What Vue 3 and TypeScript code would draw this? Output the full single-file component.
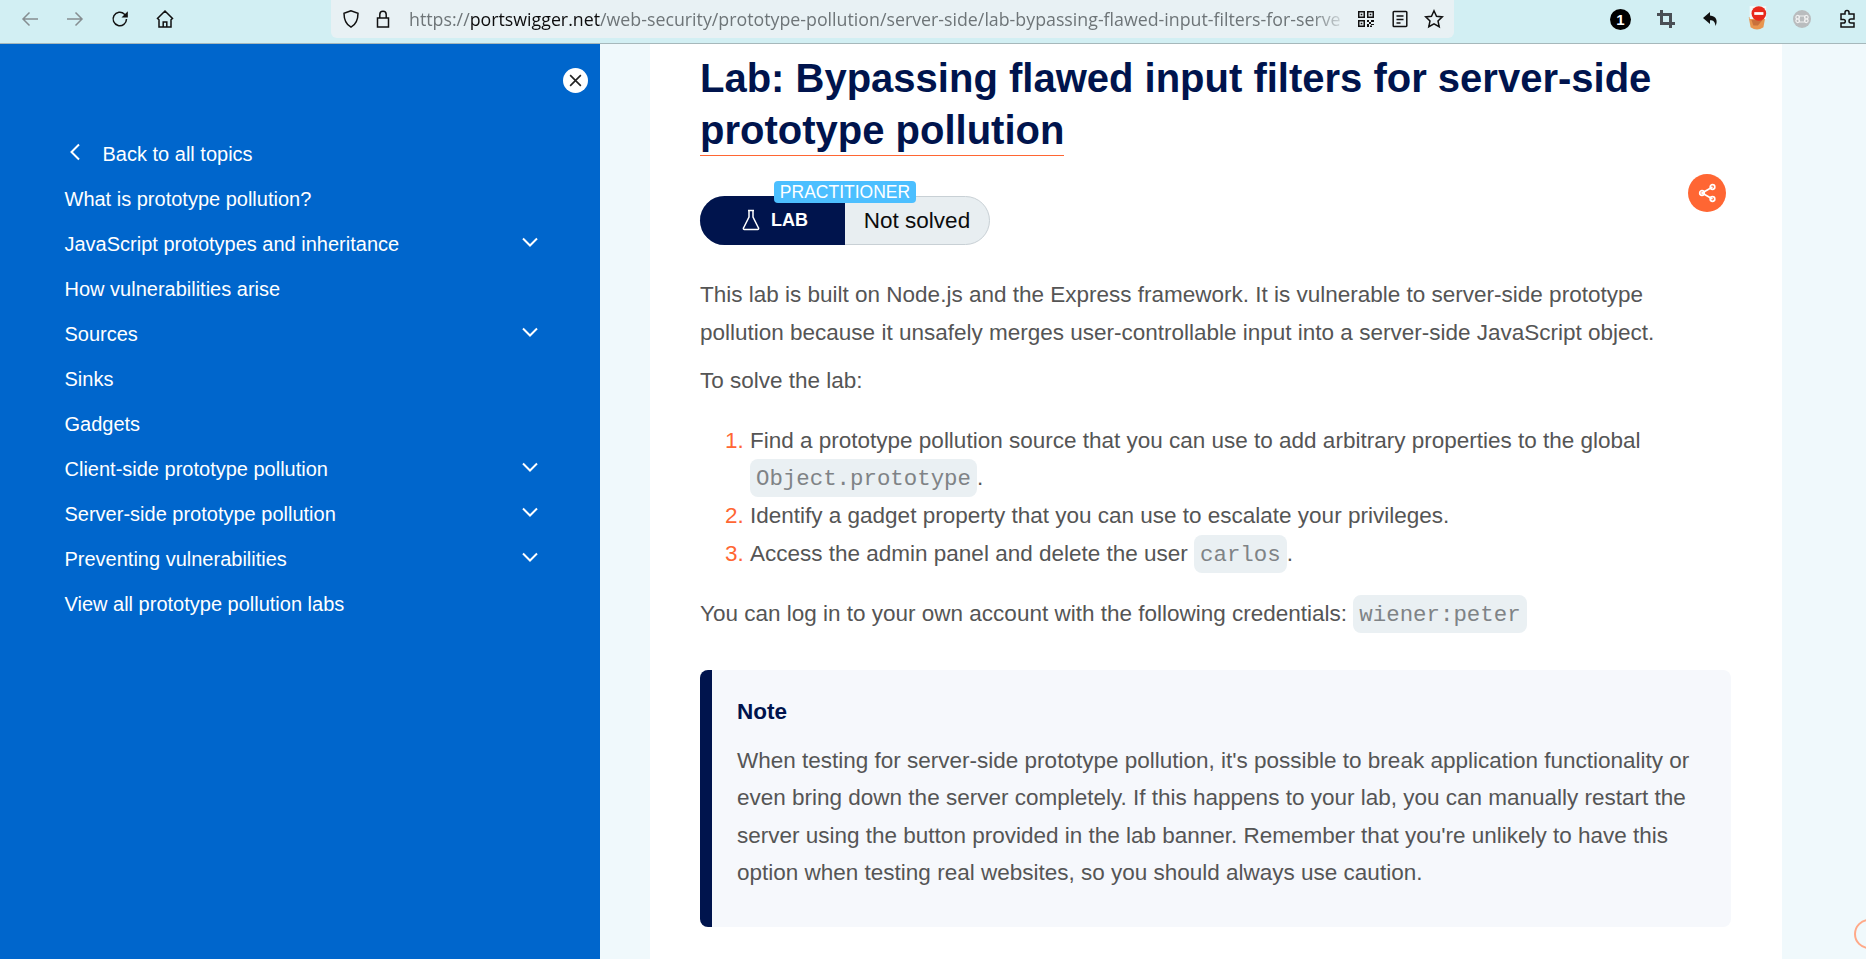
<template>
  <div class="page">
    <!-- Browser toolbar -->
    <header class="toolbar">
      <div class="nav-icons">
        <svg class="ico dim" viewBox="0 0 20 20"><path d="M18 10H3M9.500 3.500 3 10l6.500 6.500" /></svg>
        <svg class="ico dim" viewBox="0 0 20 20"><path d="M2 10h15M10.500 3.500 17 10l-6.500 6.500" /></svg>
        <svg class="ico" viewBox="0 0 20 20"><path d="M16.500 10a6.700 6.700 0 1 1-2-4.800L17 7.500" /><path class="fill" d="M17.800 2.200v6.300h-6.300z" /></svg>
        <svg class="ico" viewBox="0 0 20 20"><path d="M10 2 2.500 9.500l1.500 1.300V18h12v-7.200l1.500-1.300zM8.200 18v-5h3.600v5" /></svg>
      </div>
      <div class="urlbar">
        <svg class="ico" viewBox="0 0 20 20"><path d="M10 1.800 3 4.200c0 6.500 1.500 11 7 14 5.500-3 7-7.500 7-14z" /></svg>
        <svg class="ico lock" viewBox="0 0 20 20"><path d="M4.500 9h11v9h-11zM6.800 9V5.500a3.200 3.200 0 0 1 6.400 0V9" /></svg>
        <div class="url">
          <span>https://</span><b>portswigger.net</b><span>/web-security/prototype-pollution/server-side/lab-bypassing-flawed-input-filters-for-serve</span>
        </div>
        <svg class="ico qr" viewBox="0 0 20 20">
          <path class="fill" d="M2 2h7v7H2zM3.500 3.500v4h4v-4zM11 2h7v7h-7zM12.500 3.500v4h4v-4zM2 11h7v7H2zM3.500 12.500v4h4v-4z" />
          <path class="fill" d="M4.700 4.700h1.600v1.600H4.700zM13.700 4.700h1.600v1.600h-1.600zM4.700 13.700h1.600v1.600H4.700zM11 11h2v2h-2zM15 11h3v2h-3zM13 13h2v2h-2zM11 15h2v3h-2zM15 15h3v1h-3zM14 16.500h2V18h-2z" />
        </svg>
        <svg class="ico" viewBox="0 0 20 20"><path d="M4 2.500h12a.8.800 0 0 1 .8.800v13.400a.8.800 0 0 1-.8.800H4a.8.800 0 0 1-.8-.8V3.300a.8.800 0 0 1 .8-.8zM6.500 7h7M6.500 10.500h7M6.500 14h4" /></svg>
        <svg class="ico" viewBox="0 0 20 20"><path d="m10 1.800 2.500 5.400 5.800.7-4.300 4 1.200 5.800-5.200-2.900-5.200 2.900L6 11.900l-4.300-4 5.800-.7z" /></svg>
      </div>
      <div class="ext-icons">
        <span class="one">1</span>
        <svg class="ico crop" viewBox="0 0 20 20"><path d="M5.500 1v13.500H19M1 5.500h13.500V19" /></svg>
        <svg class="ico" viewBox="0 0 20 20"><path class="fill" d="M9 3 2 9l7 6v-3.700c3.300 0 5 1.200 5.500 5.700 2.500-4.800 1.200-10-5.500-10.500z" /></svg>
        <div class="blocker">
          <svg viewBox="0 0 24 28">
            <path d="M3 12h18l-2 11q-7 5-14 0z" fill="#e8954f" />
            <path d="M6 15h12l-5 6H8z" fill="#c9703c" />
            <rect x="4" y="0" width="18" height="14" fill="#f4f9fa" />
            <circle cx="14" cy="8" r="8" fill="#e8291c" />
            <rect x="9" y="6.500" width="10" height="3" fill="#fff" />
          </svg>
        </div>
        <svg class="grey-ext" viewBox="0 0 20 20">
          <circle cx="10" cy="10" r="9" fill="#b9bcbe" />
          <path d="M7 7h6v6H7zM7 7a1.800 1.800 0 1 1-.1-.1M13 7a1.800 1.800 0 1 0 .1-.1M7 13a1.800 1.800 0 1 0-.1.100M13 13a1.800 1.800 0 1 1 .1.100" fill="none" stroke="#f0f0f0" stroke-width="1.200" />
        </svg>
        <svg class="ico" viewBox="0 0 20 20"><path d="M8 5V3.500a2 2 0 0 1 4 0V5h5v5h-3a2 2 0 0 0 0 4h3v4H4v-4h2.500a1.800 1.800 0 0 0 0-3.600H4V5z" /></svg>
      </div>
    </header>

    <div class="body">
      <!-- Sidebar -->
      <aside class="sidebar">
        <div class="close-row">
          <button class="close" type="button">
            <svg viewBox="0 0 14 14"><path d="m2 2 10 10M12 2 2 12" /></svg>
          </button>
        </div>
        <a class="back">
          <svg viewBox="0 0 12 18"><path d="M10 1.500 2.500 9l7.500 7.500" /></svg>
          <span>Back to all topics</span>
        </a>
        <ul class="topics">
          <li v-for="t in topics" :key="t.label">
            <span>{{ t.label }}</span>
            <svg v-if="t.sub" viewBox="0 0 18 10"><path d="m2 1.500 7 7 7-7" /></svg>
          </li>
        </ul>
      </aside>

      <!-- Article -->
      <main class="gutter">
        <article class="content">
          <h1>Lab: Bypassing flawed input filters for server-side <span class="line">prototype pollution</span></h1>

          <div class="status-row">
            <div class="pill">
              <span class="tag">PRACTITIONER</span>
              <div class="pill-lab">
                <svg viewBox="0 0 20 22"><path d="M7 1.500h6M8 1.500v6.500L2.500 19a1 1 0 0 0 1 1.500h13a1 1 0 0 0 1-1.500L12 8V1.500" /></svg>
                <b>LAB</b>
              </div>
              <div class="pill-state">Not solved</div>
            </div>
            <button class="share" type="button">
              <svg viewBox="0 0 22 22">
                <path d="M16.500 5 6 11l10.500 6" />
                <circle cx="16.500" cy="5" r="2.300" /><circle cx="6" cy="11" r="2.300" /><circle cx="16.500" cy="17" r="2.300" />
              </svg>
            </button>
          </div>

          <p>This lab is built on Node.js and the Express framework. It is vulnerable to server-side prototype pollution because it unsafely merges user-controllable input into a server-side JavaScript object.</p>
          <p>To solve the lab:</p>
          <ol>
            <li>Find a prototype pollution source that you can use to add arbitrary properties to the global <code>Object.prototype</code>.</li>
            <li>Identify a gadget property that you can use to escalate your privileges.</li>
            <li>Access the admin panel and delete the user <code>carlos</code>.</li>
          </ol>
          <p>You can log in to your own account with the following credentials: <code>wiener:peter</code></p>

          <section class="note">
            <h4>Note</h4>
            <p>When testing for server-side prototype pollution, it's possible to break application functionality or even bring down the server completely. If this happens to your lab, you can manually restart the server using the button provided in the lab banner. Remember that you're unlikely to have this option when testing real websites, so you should always use caution.</p>
          </section>
        </article>
      </main>
      <span class="corner"></span>
    </div>
  </div>
</template>

<script setup lang="ts">
interface Topic {
  label: string
  sub?: boolean
}

const topics: Topic[] = [
  { label: 'What is prototype pollution?' },
  { label: 'JavaScript prototypes and inheritance', sub: true },
  { label: 'How vulnerabilities arise' },
  { label: 'Sources', sub: true },
  { label: 'Sinks' },
  { label: 'Gadgets' },
  { label: 'Client-side prototype pollution', sub: true },
  { label: 'Server-side prototype pollution', sub: true },
  { label: 'Preventing vulnerabilities', sub: true },
  { label: 'View all prototype pollution labs' },
]
</script>

<style>
html,
body {
  margin: 0;
  height: 100%;
  overflow: hidden;
}
</style>

<style scoped>
.page {
  width: 1866px;
  height: 959px;
  display: flex;
  flex-direction: column;
  overflow: hidden;
  font-family: "Liberation Sans", Arial, sans-serif;
}

/* toolbar */
.toolbar {
  height: 44px;
  box-sizing: border-box;
  flex: none;
  display: flex;
  align-items: flex-start;
  background: #d2eff3;
  border-bottom: 1px solid #a6b8bb;
}
.ico {
  width: 20px;
  height: 20px;
  flex: none;
  fill: none;
  stroke: #111;
  stroke-width: 1.500;
}
.ico .fill,
.ico.qr path {
  fill: #111;
  stroke: none;
}
.ico.dim {
  stroke: #868e91;
}
.nav-icons {
  width: 331px;
  height: 38px;
  flex: none;
  display: flex;
  align-items: center;
  gap: 25px;
  padding-left: 20px;
  box-sizing: border-box;
}
.urlbar {
  width: 1123px;
  height: 38px;
  flex: none;
  display: flex;
  align-items: center;
  padding: 0 10px;
  box-sizing: border-box;
  background: #e8f1f4;
  border-radius: 0 0 6px 6px;
}
.url {
  flex: 1;
  margin: 0 7px 0 16px;
  min-width: 0;
  white-space: nowrap;
  overflow: hidden;
  font-family: "Open Sans", sans-serif;
  font-size: 17.800px;
  color: #6e7578;
  -webkit-mask-image: linear-gradient(to right, #000 96%, transparent);
  mask-image: linear-gradient(to right, #000 96%, transparent);
}
.url b {
  font-weight: 400;
  color: #0c0c0d;
}
.urlbar .ico + .ico {
  margin-left: 14px;
}
.urlbar .ico.lock {
  margin-left: 12px;
}
.ext-icons {
  flex: 1;
  height: 38px;
  display: flex;
  align-items: center;
  gap: 25px;
  padding-left: 156px;
}
.one {
  width: 21px;
  height: 21px;
  flex: none;
  border-radius: 50%;
  background: #000;
  color: #fff;
  font-size: 15px;
  font-weight: 700;
  line-height: 21px;
  text-align: center;
}
.ico.crop {
  stroke: #4a4f55;
  stroke-width: 3;
}
.blocker {
  width: 22px;
  height: 30px;
  flex: none;
}
.blocker svg {
  width: 100%;
  height: 100%;
  display: block;
}
.grey-ext {
  width: 20px;
  height: 20px;
  flex: none;
  margin-left: -1px;
}

/* layout under the toolbar */
.body {
  flex: 1;
  min-height: 0;
  position: relative;
  display: flex;
  overflow: hidden;
  background: #f0f9fc;
}

/* sidebar */
.sidebar {
  width: 600px;
  flex: none;
  box-sizing: border-box;
  padding: 0 54px 0 64.500px;
  background: #0066cc;
  color: #fff;
  font-size: 20px;
}
.close-row {
  height: 50px;
  margin-right: -42px;
  padding-top: 24px;
  display: flex;
  justify-content: flex-end;
}
.close {
  width: 25px;
  height: 25px;
  padding: 0;
  border: 0;
  border-radius: 50%;
  background: #fff;
  display: flex;
  align-items: center;
  justify-content: center;
}
.close svg {
  width: 15px;
  height: 15px;
  fill: none;
  stroke: #222;
  stroke-width: 1.500;
}
.back {
  margin-top: 14px;
  height: 45px;
  display: flex;
  align-items: center;
  gap: 21px;
  padding-left: 3px;
}
.back svg {
  width: 14px;
  height: 18px;
  margin-top: -6px;
  fill: none;
  stroke: #fff;
  stroke-width: 2;
}
.topics {
  list-style: none;
  margin: 0;
  padding: 0;
}
.topics li {
  height: 45px;
  display: flex;
  align-items: center;
  justify-content: space-between;
}
.topics svg {
  width: 18px;
  height: 10px;
  margin: -6px 7px 0 0;
  fill: none;
  stroke: #fff;
  stroke-width: 2;
}

/* article */
.gutter {
  flex: 1;
  padding-left: 50px;
  min-width: 0;
}
.content {
  width: 1132px;
  height: 100%;
  box-sizing: border-box;
  padding: 8px 51px 0 50px;
  background: #fff;
  color: #555;
  font-size: 22.500px;
  line-height: 37.600px;
}
h1 {
  margin: 0;
  color: #00144d;
  font-size: 40px;
  font-weight: 700;
  line-height: 52px;
}
.line {
  border-bottom: 1px solid #ff6633;
  padding-bottom: 3px;
}
.status-row {
  display: flex;
  align-items: flex-start;
  justify-content: space-between;
  margin-top: 40px;
  padding-right: 5px;
}
.pill {
  position: relative;
  width: 290px;
  height: 49px;
  display: flex;
  border: 1px solid #c8d0d5;
  border-radius: 25px;
  box-sizing: border-box;
  background: #e8eef1;
  color: #0c0c0d;
}
.pill-lab {
  width: 145px;
  margin: -1px 0 -1px -1px;
  flex: none;
  display: flex;
  align-items: center;
  justify-content: center;
  gap: 10px;
  padding-left: 4px;
  box-sizing: border-box;
  background: #00144d;
  color: #fff;
  border-radius: 25px 0 0 25px;
  font-size: 18px;
}
.pill-lab svg {
  width: 20px;
  height: 22px;
  margin-top: -2px;
  fill: none;
  stroke: #fff;
  stroke-width: 1.500;
}
.pill-state {
  flex: 1;
  text-align: center;
  line-height: 48px;
}
.tag {
  position: absolute;
  left: 73px;
  top: -16px;
  width: 142px;
  height: 22px;
  z-index: 1;
  border-radius: 4px;
  background: #4cbfff;
  color: #fff;
  font-size: 17.500px;
  line-height: 22px;
  text-align: center;
}
.share {
  width: 38px;
  height: 38px;
  margin-top: -22px;
  padding: 0;
  border: 0;
  border-radius: 50%;
  background: #ff6633;
  display: flex;
  align-items: center;
  justify-content: center;
}
.share svg {
  width: 22px;
  height: 22px;
  fill: none;
  stroke: #fff;
  stroke-width: 1.700;
}
p {
  margin: 0;
}
.status-row + p {
  margin-top: 31px;
}
p + p {
  margin-top: 11px;
}
ol {
  margin: 22px 0 0;
  padding: 0 0 0 50px;
}
ol li::marker {
  color: #ff6633;
}
ol + p {
  margin-top: 22px;
}
code {
  display: inline-block;
  padding: 2px 6px 0;
  border-radius: 8px;
  background: #eaf0f3;
  color: #7f8386;
  font-family: "Liberation Mono", monospace;
  font-size: 22.400px;
  line-height: 36px;
  vertical-align: top;
}
.note {
  margin-top: 37px;
  height: 257px;
  box-sizing: border-box;
  padding: 23px 32px 0 25px;
  border-left: 12px solid #00144d;
  border-radius: 8px;
  background: #f6f8fc;
}
.note h4 {
  margin: 0 0 11px;
  color: #00144d;
  font-size: 22.500px;
  font-weight: 700;
}
.corner {
  position: absolute;
  right: -18px;
  bottom: 10px;
  width: 30px;
  height: 30px;
  box-sizing: border-box;
  border: 2px solid #ffa988;
  border-radius: 50%;
}
</style>
